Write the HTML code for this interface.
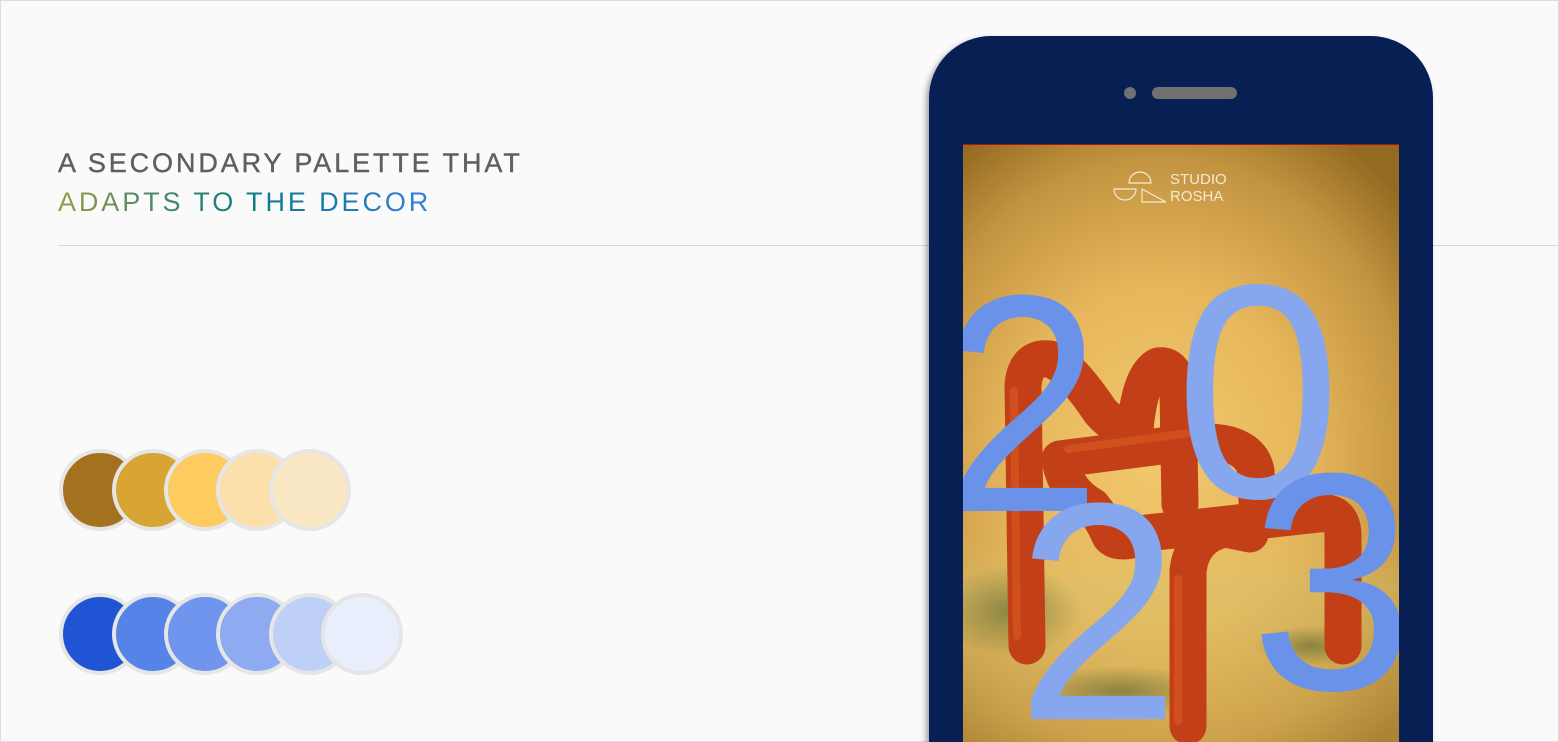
<!DOCTYPE html>
<html><head><style>
html,body{margin:0;padding:0;overflow:hidden;width:1559px;height:742px}
body{background:#fafafa;position:relative;font-family:"Liberation Sans",sans-serif}
.frame{position:absolute;left:0;top:0;width:1557px;height:740px;border:1px solid #dcdcdc}
.t{position:absolute;left:58px;font-size:27px;letter-spacing:2.9px;line-height:1;white-space:nowrap;-webkit-text-stroke:0.4px currentColor}
.line{position:absolute;left:58px;right:0;top:245px;height:1px;background:#d8d8d8}
.c{position:absolute;width:74px;height:74px;border-radius:50%;border:4px solid #e6e6e6}
.phone{position:absolute;left:929px;top:36px;width:504px;height:706px;background:#081f54;border-radius:62px 62px 0 0;box-shadow:-3px 3px 6px rgba(0,0,0,.35)}
.dot{position:absolute;left:1124px;top:87px;width:12px;height:12px;border-radius:50%;background:#717171}
.spk{position:absolute;left:1152px;top:87px;width:85px;height:12px;border-radius:6px;background:#717171}
.screen{position:absolute;left:963px;top:144px;width:436px;height:597px;overflow:hidden;border-top:1px solid #b01010;
background:radial-gradient(ellipse 330px 380px at 45% 52%,#f3c96e 0%,#e6b65c 45%,#c39440 78%,#946a22 100%)}
</style></head><body>
<div class="frame"></div>
<div class="t" style="top:150px;color:#5f5f5f">A SECONDARY PALETTE THAT</div>
<div class="t" style="top:189px;color:#2a7fb8;-webkit-text-stroke:0;background:linear-gradient(90deg,#9a9c44 0%,#4f8a6a 25%,#0e7c86 50%,#1a7bb0 75%,#3a7fd6 100%);-webkit-background-clip:text;background-clip:text;-webkit-text-fill-color:transparent">ADAPTS TO THE DECOR</div>
<div class="line"></div>

<div class="c" style="left:59px;top:449px;background:#a4721e"></div>
<div class="c" style="left:112px;top:449px;background:#d8a535"></div>
<div class="c" style="left:164px;top:449px;background:#fdcb60"></div>
<div class="c" style="left:216px;top:449px;background:#fbe0ab"></div>
<div class="c" style="left:269px;top:449px;background:#fae8c4"></div>

<div class="c" style="left:59px;top:593px;background:#1f55d4"></div>
<div class="c" style="left:112px;top:593px;background:#5583e8"></div>
<div class="c" style="left:164px;top:593px;background:#6f95ef"></div>
<div class="c" style="left:216px;top:593px;background:#8eaaf0"></div>
<div class="c" style="left:269px;top:593px;background:#bfd0f8"></div>
<div class="c" style="left:321px;top:593px;background:#e8eefb"></div>

<div class="phone"></div>
<div class="dot"></div><div class="spk"></div>
<div class="screen">
<svg width="436" height="597" viewBox="963 144 436 597" style="position:absolute;left:0;top:0">
 <defs>
  <radialGradient id="sh" cx="0.5" cy="0.5" r="0.5"><stop offset="0" stop-color="#3f5a2a" stop-opacity=".5"/><stop offset="1" stop-color="#3f5a2a" stop-opacity="0"/></radialGradient>
  <linearGradient id="fl" x1="0" y1="0" x2="0" y2="1"><stop offset="0" stop-color="#e8c468" stop-opacity="0"/><stop offset=".3" stop-color="#d9c56e" stop-opacity=".5"/><stop offset="1" stop-color="#e2bd62" stop-opacity=".3"/></linearGradient>
 </defs>
 <rect x="963" y="520" width="436" height="222" fill="url(#fl)"/>
 <ellipse cx="1010" cy="610" rx="70" ry="45" fill="url(#sh)"/>
 <ellipse cx="1120" cy="690" rx="90" ry="25" fill="url(#sh)"/>
 <ellipse cx="1310" cy="645" rx="55" ry="20" fill="url(#sh)"/>
 <g fill="none" stroke="#f3ead6" stroke-width="1.2">
  <path d="M1129 182 a11 11 0 0 1 22 0 z"/>
  <path d="M1114 188 a11 11 0 0 0 22 0 z"/>
  <path d="M1142 188 l0 13 l24 0 z"/>
 </g>
 <text x="1170" y="183" font-size="15" fill="#f3ead6" font-family="Liberation Sans">STUDIO</text>
 <text x="1170" y="200" font-size="15" fill="#f3ead6" font-family="Liberation Sans">ROSHA</text>
 <g fill="none" stroke="#c23f17" stroke-width="37" stroke-linecap="round" stroke-linejoin="round">
  <path d="M1027 645 L1023 385 Q1025 355 1050 358 Q1070 365 1100 410 Q1115 428 1135 428"/>
  <path d="M1135 428 Q1140 375 1158 365 Q1176 362 1178 392 L1180 503"/>
  <path d="M1147 532 L1328 512 Q1343 515 1343 535 L1343 645"/>
  <path d="M1060 458 L1193 441 Q1250 438 1256 470 L1257 500"/>
  <path d="M1060 458 Q1065 490 1092 505 Q1103 518 1110 535 Q1118 545 1147 535"/>
  <path d="M1188 725 L1188 570 Q1192 535 1225 528 L1250 533"/>
 </g>
 <g fill="none" stroke="#e56a2a" stroke-width="8" stroke-linecap="round" opacity=".4">
  <path d="M1017 635 L1014 390"/><path d="M1068 448 L1190 432"/><path d="M1178 720 L1178 578"/>
 </g>
 <g font-family="Liberation Sans" text-anchor="middle">
  <text x="1022" y="510" font-size="310" fill="#6a92e8" transform="translate(1022 0) scale(0.92 1) translate(-1022 0)">2</text>
  <text x="1258" y="496" font-size="305" fill="#86a6ee" transform="translate(1258 0) scale(0.98 1) translate(-1258 0)">0</text>
  <text x="1098" y="718" font-size="310" fill="#86a6ee" transform="translate(1098 0) scale(0.95 1) translate(-1098 0)">2</text>
  <text x="1332" y="688" font-size="310" fill="#6a92e8" transform="translate(1332 0) scale(0.95 1) translate(-1332 0)">3</text>
 </g>
</svg>
</div>
</body></html>
